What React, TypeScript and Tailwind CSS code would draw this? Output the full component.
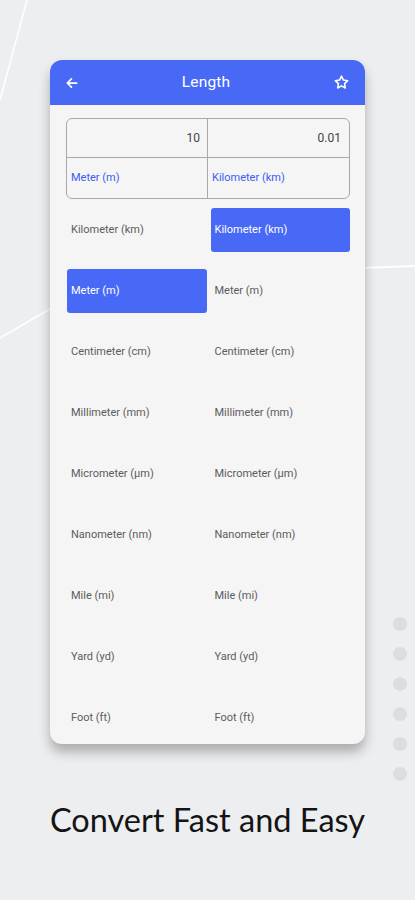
import React from "react";

const units = [
  "Kilometer (km)",
  "Meter (m)",
  "Centimeter (cm)",
  "Millimeter (mm)",
  "Micrometer (µm)",
  "Nanometer (nm)",
  "Mile (mi)",
  "Yard (yd)",
  "Foot (ft)",
];

function UnitCell({ label, active }: { label: string; active: boolean }) {
  return (
    <div
      className={
        active
          ? "flex items-center h-[44px] pl-[4px] rounded-[3px] bg-[#4869f6] text-white text-[11px]"
          : "flex items-center h-[44px] pl-[4px] text-[#5c5c5c] text-[11px]"
      }
    >
      {label}
    </div>
  );
}

export default function App() {
  return (
    <div className="relative w-[415px] h-[900px] overflow-hidden bg-[#edeef0] font-['Roboto',sans-serif]">
      {/* background strokes */}
      <svg className="absolute inset-0" width="415" height="900" viewBox="0 0 415 900" fill="none">
        <path d="M27 0 L0 100" stroke="#ffffff" strokeWidth="1.5" />
        <path d="M0 338 L60 303" stroke="#ffffff" strokeWidth="1.5" />
        <path d="M360 268 L415 266" stroke="#ffffff" strokeWidth="2" />
      </svg>

      {/* pager dots */}
      <div className="absolute left-[393px] top-[617px] flex flex-col gap-[16px]">
        {[0, 1, 2, 3, 4, 5].map((i) => (
          <div key={i} className="w-[14px] h-[14px] rounded-full bg-[#dcdddf]" />
        ))}
      </div>

      <div className="relative flex flex-col items-center pt-[60px]">
        {/* phone card */}
        <div className="w-[315px] h-[684px] rounded-[12px] bg-[#f5f5f5] overflow-hidden shadow-[0_8px_12px_rgba(0,0,0,0.28)]">
          <div className="flex items-center justify-between h-[45px] px-[15px] bg-[#4869f6] text-white">
            <svg width="14" height="14" viewBox="0 0 24 24" fill="none" stroke="currentColor" strokeWidth="3" strokeLinecap="round" strokeLinejoin="round">
              <path d="M20 12H5M11 5l-7 7 7 7" />
            </svg>
            <span className="text-[15.5px] font-normal tracking-[0.2px]">Length</span>
            <svg width="17" height="17" viewBox="0 0 24 24" fill="none" stroke="currentColor" strokeWidth="2.2" strokeLinejoin="round">
              <path d="M12 3l2.7 5.6 6.1.8-4.5 4.2 1.1 6.1L12 16.8l-5.4 2.9 1.1-6.1-4.5-4.2 6.1-.8z" />
            </svg>
          </div>

          <div className="px-[16px] pt-[13px]">
            {/* conversion table */}
            <div className="grid grid-cols-2 w-[284px] border border-[#a9a9a9] rounded-[6px] overflow-hidden">
              <div className="flex items-center justify-end h-[39px] pr-[7px] border-r border-b border-[#a9a9a9] text-[12px] text-[#444]">10</div>
              <div className="flex items-center justify-end h-[39px] pr-[8px] border-b border-[#a9a9a9] text-[12px] text-[#444]">0.01</div>
              <div className="flex items-center h-[40px] pl-[4px] border-r border-[#a9a9a9] text-[11px] text-[#3d5cf2]">Meter (m)</div>
              <div className="flex items-center h-[40px] pl-[4px] text-[11px] text-[#3d5cf2]">Kilometer (km)</div>
            </div>

            {/* unit list */}
            <div className="flex flex-col gap-[17px] mt-[9px]">
              {units.map((u, i) => (
                <div key={u} className="grid grid-cols-2 gap-[4px] w-[284px] pl-[1px]">
                  <UnitCell label={u} active={i === 1} />
                  <UnitCell label={u} active={i === 0} />
                </div>
              ))}
            </div>
          </div>
        </div>

        <h1 className="mt-[56px] text-[32.5px] leading-[40px] text-[#141414] font-['Lato',sans-serif]">
          Convert Fast and Easy
        </h1>
      </div>
    </div>
  );
}
